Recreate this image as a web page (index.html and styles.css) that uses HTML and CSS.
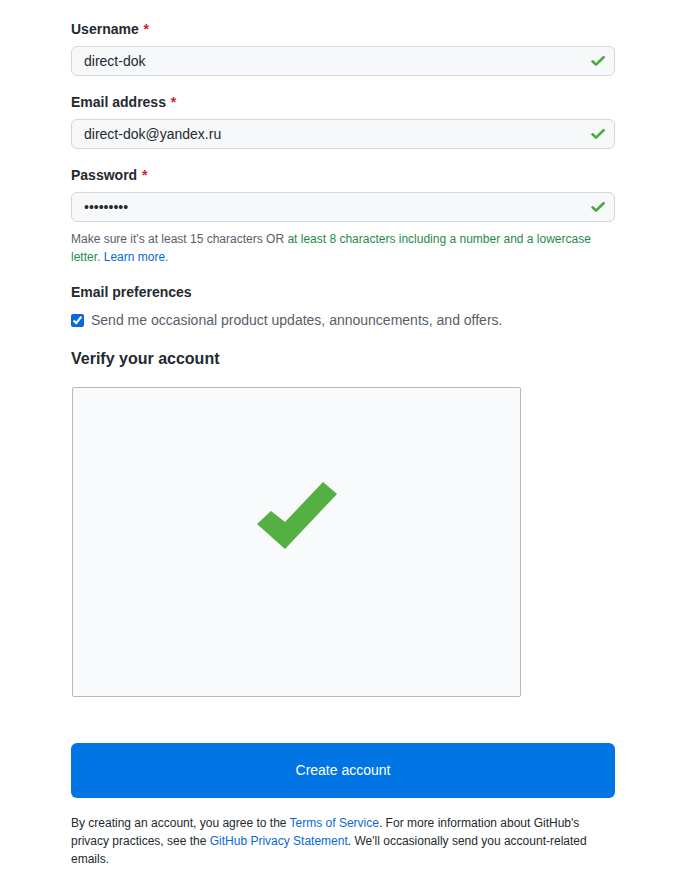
FILE: index.html
```html
<!DOCTYPE html>
<html>
<head>
<meta charset="utf-8">
<link rel="stylesheet" href="styles.css">
</head>
<body>
<div class="form">
  <div class="field">
    <label class="label">Username <span class="req">*</span></label>
    <div class="input">
      <span class="value">direct-dok</span>
      <svg class="ok" viewBox="0 0 16 16" width="16" height="16"><polyline points="2.5,8.3 6,11.6 13.6,4.2"/></svg>
    </div>
  </div>
  <div class="field">
    <label class="label">Email address <span class="req">*</span></label>
    <div class="input">
      <span class="value">direct-dok@yandex.ru</span>
      <svg class="ok" viewBox="0 0 16 16" width="16" height="16"><polyline points="2.5,8.3 6,11.6 13.6,4.2"/></svg>
    </div>
  </div>
  <div class="field">
    <label class="label">Password <span class="req">*</span></label>
    <div class="input">
      <span class="value dots">•••••••••</span>
      <svg class="ok" viewBox="0 0 16 16" width="16" height="16"><polyline points="2.5,8.3 6,11.6 13.6,4.2"/></svg>
    </div>
    <p class="help">Make sure it's at least 15 characters OR <span class="good">at least 8 characters including a number and a lowercase letter.</span> <a class="link" href="#">Learn more.</a></p>
  </div>
  <div class="prefs">
    <div class="label">Email preferences</div>
    <label class="check-row"><input type="checkbox" class="cb" checked> Send me occasional product updates, announcements, and offers.</label>
  </div>
  <h2 class="verify">Verify your account</h2>
  <div class="captcha">
    <svg class="bigcheck" width="80" height="68" viewBox="0 0 80 68"><polygon points="0,42 14,29 28,40 66,0 80,12 28,67" fill="#55b043"/></svg>
  </div>
  <button class="btn">Create account</button>
  <p class="legal">By creating an account, you agree to the <a class="link" href="#">Terms of Service</a>. For more information about GitHub's privacy practices, see the <a class="link" href="#">GitHub Privacy Statement</a>. We'll occasionally send you account-related emails.</p>
</div>
</body>
</html>
```

FILE: styles.css
```css
html, body {
  margin: 0;
  padding: 0;
  background: #ffffff;
}
body {
  font-family: "Liberation Sans", Arial, sans-serif;
  color: #24292f;
}
.form {
  width: 544px;
  margin-left: 71px;
  padding-top: 19px;
}
.field {
  margin-bottom: 16px;
}
.label {
  display: block;
  font-size: 14px;
  font-weight: bold;
  line-height: 20px;
  margin-bottom: 7px;
  color: #24292f;
}
.req {
  color: #cf222e;
  margin-left: 1px;
}
.input {
  box-sizing: border-box;
  height: 30px;
  border: 1px solid #d0d7de;
  border-radius: 6px;
  background: #f6f8fa;
  display: flex;
  align-items: center;
  justify-content: space-between;
  padding: 0 8px 0 12px;
}
.value {
  font-size: 14px;
  color: #24292f;
}
.dots {
  font-size: 14px;
  letter-spacing: 0;
}
.ok {
  fill: none;
  stroke: #4ea83d;
  stroke-width: 2.6;
  stroke-linecap: round;
  stroke-linejoin: round;
}
.help {
  margin: 8px 0 0;
  font-size: 12px;
  line-height: 18px;
  color: #57606a;
}
.good {
  color: #1f8b4c;
}
.link {
  color: #0969da;
  text-decoration: none;
}
.prefs .label {
  margin-bottom: 8px;
}
.check-row {
  display: flex;
  align-items: center;
  font-size: 14px;
  line-height: 20px;
  color: #57606a;
}
.cb {
  width: 13px;
  height: 13px;
  margin: 0 7px 0 0;
  accent-color: #0969da;
}
.verify {
  margin: 17px 0 16px;
  font-size: 16px;
  line-height: 24px;
  font-weight: bold;
  color: #24292f;
}
.captcha {
  box-sizing: border-box;
  width: 449px;
  height: 310px;
  margin-left: 1px;
  border: 1px solid #b8b8b8;
  border-radius: 2px;
  background: #f9fafb;
  display: flex;
  justify-content: center;
  align-items: flex-start;
  padding-top: 94px;
}
.btn {
  display: block;
  width: 544px;
  height: 55px;
  margin-top: 46px;
  padding-bottom: 2px;
  border: none;
  border-radius: 6px;
  background: #0075e3;
  color: #ffffff;
  font-family: "Liberation Sans", Arial, sans-serif;
  font-size: 14px;
}
.legal {
  margin: 16px 0 0;
  font-size: 12px;
  line-height: 18px;
  color: #24292f;
}
```
